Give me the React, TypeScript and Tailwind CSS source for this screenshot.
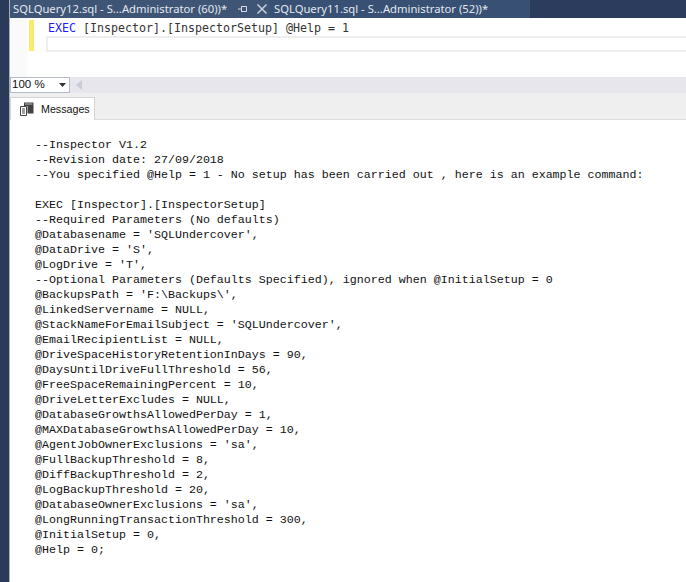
const lines = [
  "--Inspector V1.2",
  "--Revision date: 27/09/2018",
  "--You specified @Help = 1 - No setup has been carried out , here is an example command:",
  "",
  "EXEC [Inspector].[InspectorSetup]",
  "--Required Parameters (No defaults)",
  "@Databasename = 'SQLUndercover',",
  "@DataDrive = 'S',",
  "@LogDrive = 'T',",
  "--Optional Parameters (Defaults Specified), ignored when @InitialSetup = 0",
  "@BackupsPath = 'F:\\Backups\\',",
  "@LinkedServername = NULL,",
  "@StackNameForEmailSubject = 'SQLUndercover',",
  "@EmailRecipientList = NULL,",
  "@DriveSpaceHistoryRetentionInDays = 90,",
  "@DaysUntilDriveFullThreshold = 56,",
  "@FreeSpaceRemainingPercent = 10,",
  "@DriveLetterExcludes = NULL,",
  "@DatabaseGrowthsAllowedPerDay = 1,",
  "@MAXDatabaseGrowthsAllowedPerDay = 10,",
  "@AgentJobOwnerExclusions = 'sa',",
  "@FullBackupThreshold = 8,",
  "@DiffBackupThreshold = 2,",
  "@LogBackupThreshold = 20,",
  "@DatabaseOwnerExclusions = 'sa',",
  "@LongRunningTransactionThreshold = 300,",
  "@InitialSetup = 0,",
  "@Help = 0;",
];

export default function App() {
  return (
    <div className="w-[686px] h-[582px] overflow-hidden flex bg-white font-['Noto_Sans',sans-serif]">
      <div className="w-[9px] shrink-0 bg-[#2a3b59]" />
      <div className="w-[1px] shrink-0 bg-[#a8adb8]" />
      <div className="flex-1 min-w-0 flex flex-col">
        <div className="h-[18px] shrink-0 flex bg-[#2b3c5c] text-[11.250px] leading-[18px] text-[#e4e8f0]">
          <div className="w-[260px] shrink-0 flex items-center bg-[#3f5576] pl-[3px] whitespace-nowrap">
            <span className="w-[224px] shrink-0">SQLQuery12.sql - S...Administrator (60))*</span>
            <svg width="12" height="10" viewBox="0 0 12 10" className="shrink-0 text-[#d5dbe6]">
              <path d="M1 5h3M4.500 2v6M4.500 2.500h5M4.500 7.500h5M9.500 2.500v5" stroke="currentColor" fill="none" />
            </svg>
            <svg width="12" height="12" viewBox="0 0 12 12" className="ml-[7px] shrink-0 text-[#c9d1de]">
              <path d="M1.500 1.500l9 9M10.500 1.500l-9 9" stroke="currentColor" strokeWidth="1.500" fill="none" />
            </svg>
          </div>
          <div className="w-[260px] shrink-0 bg-[#375073] pl-[4px] whitespace-nowrap">
            SQLQuery11.sql - S...Administrator (52))*
          </div>
        </div>

        <div className="h-[59px] shrink-0 flex bg-white">
          <div className="w-[17px] shrink-0 bg-[#fafafa]" />
          <div className="w-[2px] shrink-0" />
          <div className="w-[5px] h-[31px] mt-[2px] shrink-0 bg-[#fbe96a]" />
          <div className="flex-1 min-w-0 pl-[12px] font-['DejaVu_Sans_Mono',monospace] text-[11.630px] whitespace-nowrap">
            <div className="h-[18px] leading-[20px] pl-[2px] text-[#333]">
              <span className="text-[#1a1aff]">EXEC</span> [Inspector].[InspectorSetup] @Help = 1
            </div>
            <div className="h-[16px] border-2 border-r-0 border-[#eeeeee]" />
          </div>
        </div>

        <div className="h-[16px] shrink-0 flex items-center bg-[#e6e6ec]">
          <div className="w-[60px] h-[16px] flex items-center justify-between border border-[#b5bcc9] bg-white pl-[1px] pr-[3px] font-['Liberation_Sans',sans-serif] text-[11.500px] leading-none text-[#111]">
            <span>100 %</span>
            <svg width="7" height="4" viewBox="0 0 7 4"><path d="M0 0h7L3.500 4z" fill="#333" /></svg>
          </div>
          <svg width="6" height="10" viewBox="0 0 6 10" className="ml-[6px]"><path d="M6 0v10L0 5z" fill="#c9ccd3" /></svg>
        </div>

        <div className="h-[27px] shrink-0 flex items-end bg-[#efefef] border-b border-[#dcdcdc]">
          <div className="w-[85px] h-[23px] -mb-px flex items-center bg-white border border-b-0 border-[#d4d4d4] pl-[8px] font-['Liberation_Sans',sans-serif] text-[10.700px] text-[#111]">
            <svg width="15" height="14" viewBox="0 0 15 14" className="shrink-0">
              <path d="M1.500 4.500h6v9h-6zM3 7h3M3 9h3M3 11h3" fill="#fff" stroke="#424242" />
              <path d="M8 .5h6.500v11H8.500V4H5V.5z" fill="#424242" />
              <path d="M6 2h7.500" stroke="#bbb" />
            </svg>
            <span className="ml-[7px]">Messages</span>
          </div>
        </div>

        <div className="flex-1 min-h-0 pt-[18px] pl-[25px] font-['Liberation_Mono',monospace] text-[11.670px] leading-[15px] text-[#111] whitespace-pre">
          {lines.map((l, i) => (
            <div key={i} className="h-[15px]">{l}</div>
          ))}
        </div>
      </div>
    </div>
  );
}
